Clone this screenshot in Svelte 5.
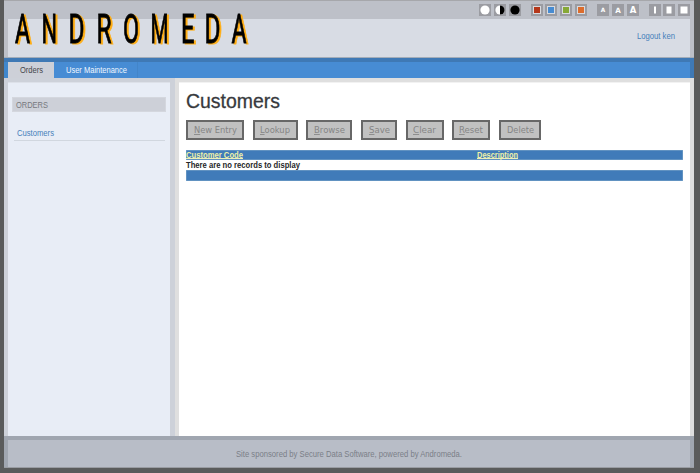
<script>
  const logo = [
    ['A', 15, 15], ['N', 41.5, 15.5], ['D', 68.5, 16], ['R', 96.5, 15], ['O', 123, 16],
    ['M', 150.5, 18], ['E', 181, 13.5], ['D', 204.5, 16], ['A', 231.5, 15]
  ];
  const buttons = [
    ['New Entry', 58, 43], ['Lookup', 45, 30], ['Browse', 46, 31], ['Save', 36, 21],
    ['Clear', 38, 23], ['Reset', 38, 24], ['Delete', 42, 27]
  ];
  const colors = ['#b5371b', '#478bd1', '#86a836', '#dc6c2c'];
  const textSizes = [5.8, 7.2, 8.5];
  const widths = [2, 5, 7];
</script>

{#snippet label(text, width, underline = false)}
  <svg class="label" width={width} height="12" role="img" aria-label={text}>
    <text x="0" y="9" textLength={width} lengthAdjust="spacingAndGlyphs">{#if underline}<tspan text-decoration="underline">{text[0]}</tspan>{text.slice(1)}{:else}{text}{/if}</text>
  </svg>
{/snippet}

<div class="page">
  <header>
    <div class="top"></div>
    <div class="banner"><a class="logout" href="#logout">{@render label('Logout ken', 38)}</a></div>
    <svg class="logo" width="245" height="50">
      {#each logo as [letter, x, w]}
        <text {x} y="43.3" textLength={w} lengthAdjust="spacingAndGlyphs">{letter}</text>
      {/each}
    </svg>
    <div class="tools">
      <div class="group">
        {#each ['#fff', 'half', '#000'] as c}
          <span class="tool"><svg width="12" height="12"><circle cx="6" cy="6" r="4.6" fill={c === 'half' ? '#fff' : c} />{#if c === 'half'}<path d="M6 1.4a4.6 4.6 0 0 1 0 9.2z" fill="#000" />{/if}</svg></span>
        {/each}
      </div>
      <div class="group">
        {#each colors as c}
          <span class="tool"><svg width="12" height="12"><rect x="2.5" y="2.5" width="7" height="7" fill={c} stroke="#d9dade" /></svg></span>
        {/each}
      </div>
      <div class="group">
        {#each textSizes as s}
          <span class="tool"><svg width="12" height="12"><text x="6" y={6 + s * 0.36} font-size={s} text-anchor="middle" class="size">A</text></svg></span>
        {/each}
      </div>
      <div class="group">
        {#each widths as w}
          <span class="tool"><svg width="12" height="12"><rect x={6 - w / 2} y="2.5" width={w} height="7" fill="#fff" /></svg></span>
        {/each}
      </div>
    </div>
  </header>
  <nav>
    <div class="tabs">
      <a class="tab active" href="#orders">{@render label('Orders', 23)}</a>
      <a class="tab users" href="#users">{@render label('User Maintenance', 61)}</a>
    </div>
  </nav>
  <main>
    <aside>
      <div class="menu">
        <h2>{@render label('ORDERS', 32)}</h2>
        <a href="#customers">{@render label('Customers', 37)}</a>
      </div>
    </aside>
    <section>
      <div class="content">
        <h1><svg width="94" height="27"><text x="0" y="17.5" textLength="94" lengthAdjust="spacingAndGlyphs">Customers</text></svg></h1>
        <div class="actions">
          {#each buttons as [text, w, tw], i}
            <button style:width="{w}px">{@render label(text, tw, i < 6)}</button>
          {/each}
        </div>
        <div class="table">
          <div class="row blue"><span class="code"><span class="link">{@render label('Customer Code', 57)}</span></span><span class="link">{@render label('Description', 41)}</span></div>
          <div class="row">{@render label('There are no records to display', 114)}</div>
          <div class="row blue"></div>
        </div>
      </div>
    </section>
  </main>
  <footer><div>{@render label('Site sponsored by Secure Data Software, powered by Andromeda.', 226)}</div></footer>
</div>

<style>
  :global(body) { background: #5a5b5b; }
  * { box-sizing: border-box; }
  svg { display: block; flex: none; }
  .label { overflow: visible; fill: currentColor; }
  .page {
    width: 700px; height: 473px; display: flex; flex-direction: column;
    border: solid #5a5b5b; border-width: 0 6px 5px 4px;
    font: 8.7px "Liberation Sans", Arial, sans-serif; overflow: hidden;
  }
  a { text-decoration: none; color: #4580ba; }
  header { position: relative; height: 58px; flex: none; background: #bdc0c8; border-top: 1px solid #a6a7ab; border-bottom: 1px solid #a3adb9; }
  .top { height: 18px; }
  .banner { height: 38px; margin: 0 4px; background: #d8dce4; display: flex; justify-content: flex-end; padding: 11px 15px 0 0; }
  .logo {
    position: absolute; left: -4px; top: -1px; width: 260px; overflow: visible;
    font: 41.5px Roboto, sans-serif; fill: #000; stroke: #000; stroke-width: 0.9;
    filter: drop-shadow(2px 1.5px 0 #ffad12);
  }
  .tools { position: absolute; left: 475px; top: 3px; display: flex; }
  .group { display: flex; gap: 2.8px; margin-right: 10px; }
  .tool { width: 12px; height: 12px; background: #9b9ca2; }
  .size { font-family: "DejaVu Sans", sans-serif; font-weight: bold; fill: #fff; }
  nav { height: 20px; flex: none; background: #4087cd; border-top: 4px solid #3f79b5; border-right: 4px solid #3f79b5; padding-left: 4px; }
  .tabs { height: 16px; display: flex; background: #478cd4; }
  .tab { height: 16px; display: flex; padding-top: 2px; }
  .active { width: 46px; background: #cdd0d8; color: #44464b; padding-left: 11.5px; }
  .users { width: 84px; color: #f0f7ff; padding-left: 12px; border-right: 1px solid #4385c9; }
  main { flex: 1; min-height: 0; display: flex; }
  aside { width: 171px; background: #cdd1d9; padding: 4px 5px 0 4px; }
  .menu { height: 100%; background: #e8edf6; border-top: 1px solid #dde1e9; padding: 14px 4px; }
  h2 { margin: 0; height: 15px; width: 154px; background: #cdd0d8; border: 1px solid #d4d7de; color: #77797e; font-size: 9px; font-weight: normal; padding: 1px 3px; }
  .menu a { display: block; margin: 15px 0 0 2px; width: 151px; height: 14px; padding-left: 3px; border-bottom: 1px solid #d1d7df; }
  section { flex: 1; background: #dfdfdf; padding: 4px 4px 0; }
  .content { height: 100%; background: #fff; border-top: 1px solid #f2f2f2; padding: 7px 7.5px 7px 7px; }
  h1 { margin: 0; height: 30px; font-size: 20px; font-weight: normal; }
  h1 svg { fill: #37393d; stroke: #37393d; stroke-width: 0.3; overflow: visible; }
  .actions { display: flex; gap: 8.7px; }
  button { height: 20px; flex: none; display: flex; align-items: center; justify-content: center; padding: 0; margin: 0; background: #c1c1c1; border: 2px solid #676767; border-radius: 0; color: #858585; font: 8.4px "DejaVu Sans", sans-serif; }
  .table { margin-top: 9.5px; color: #252629; font-weight: bold; font-size: 8.2px; }
  .row { height: 10.4px; display: flex; }
  .blue { background: #407bb9; box-shadow: inset 0 0 0 0.5px #81aaca; color: #eef1a8; }
  .row .label { height: 10px; margin-top: -0.5px; }
  .code { width: 291px; display: flex; }
  .link { height: 9.5px; border-bottom: 1px solid #e9edb8; }
  footer { height: 32px; flex: none; background: #a0a6b0; border-bottom: 1px solid #999ca2; padding: 4px 4px 0; }
  footer div { height: 27px; background: #b8bdc7; color: #7b7f88; display: flex; justify-content: center; padding: 8px 1px 0 0; }
</style>
